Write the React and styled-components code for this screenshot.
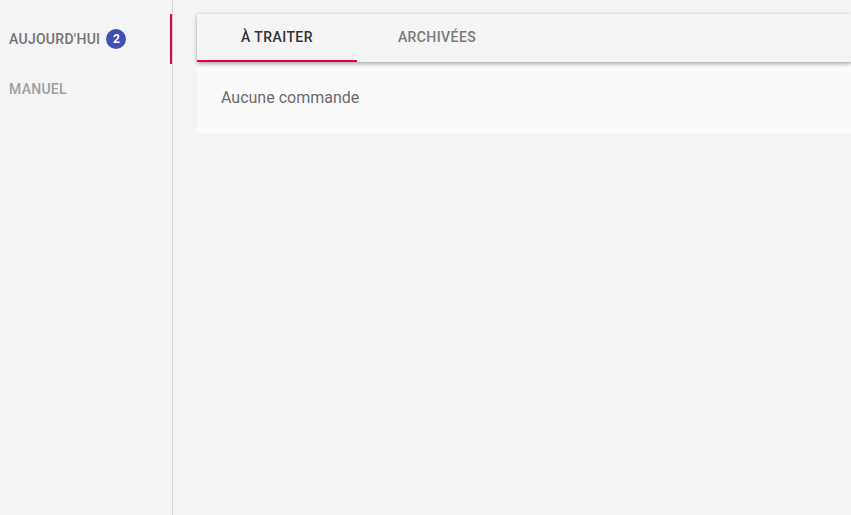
import React, { useState } from "react";
import styled, { createGlobalStyle } from "styled-components";

const GlobalStyle = createGlobalStyle`
  html, body, #root {
    margin: 0;
    height: 100%;
  }
  body {
    background: #f4f4f4;
    font-family: Roboto, "Liberation Sans", Arial, sans-serif;
    overflow: hidden;
  }
`;

const Layout = styled.div`
  display: flex;
  height: 100%;
`;

const Sidebar = styled.nav`
  width: 172px;
  flex-shrink: 0;
  border-right: 1px solid #d6d6d6;
  padding-top: 14px;
  display: flex;
  flex-direction: column;
`;

const SideItem = styled.div`
  position: relative;
  height: 50px;
  display: flex;
  align-items: center;
  gap: 6px;
  padding-left: 9px;
  font-size: 14px;
  font-weight: 500;
  letter-spacing: 0.02em;
  text-transform: uppercase;
  color: ${(p) => (p.$active ? "#737373" : "#a0a0a0")};
  cursor: pointer;

  &::after {
    content: "";
    position: absolute;
    right: 0;
    top: 0;
    bottom: 0;
    width: 2px;
    background: ${(p) => (p.$active ? "#e8004d" : "transparent")};
  }
`;

const Badge = styled.span`
  width: 20px;
  height: 20px;
  border-radius: 50%;
  background: #3f51b5;
  color: #fff;
  font-size: 12px;
  font-weight: 700;
  display: flex;
  align-items: center;
  justify-content: center;
  letter-spacing: 0;
`;

const Main = styled.main`
  flex: 1;
  padding: 14px 0 0 24px;
  display: flex;
  flex-direction: column;
`;

const TabBar = styled.div`
  position: relative;
  z-index: 1;
  height: 48px;
  display: flex;
  background: #f4f4f4;
  box-shadow: 0 2px 4px rgba(0, 0, 0, 0.28), 0 0 3px rgba(0, 0, 0, 0.12);
`;

const Tab = styled.button`
  width: 160px;
  height: 48px;
  border: none;
  background: none;
  padding: 0;
  font-family: inherit;
  font-size: 14px;
  font-weight: 500;
  letter-spacing: 0.03em;
  text-transform: uppercase;
  color: ${(p) => (p.$active ? "#333333" : "#7a7a7a")};
  border-bottom: 2px solid ${(p) => (p.$active ? "#e8004d" : "transparent")};
  cursor: pointer;
`;

const Panel = styled.div`
  background: #fafafa;
  padding: 24px;
  font-size: 16px;
  line-height: 23px;
  color: #6b6b6b;
`;

export default function App() {
  const [section, setSection] = useState("today");
  const [tab, setTab] = useState("todo");

  return (
    <>
      <GlobalStyle />
      <Layout>
        <Sidebar>
          <SideItem $active={section === "today"} onClick={() => setSection("today")}>
            Aujourd'hui <Badge>2</Badge>
          </SideItem>
          <SideItem $active={section === "manual"} onClick={() => setSection("manual")}>
            Manuel
          </SideItem>
        </Sidebar>
        <Main>
          <TabBar>
            <Tab $active={tab === "todo"} onClick={() => setTab("todo")}>
              À traiter
            </Tab>
            <Tab $active={tab === "archived"} onClick={() => setTab("archived")}>
              Archivées
            </Tab>
          </TabBar>
          <Panel>Aucune commande</Panel>
        </Main>
      </Layout>
    </>
  );
}
